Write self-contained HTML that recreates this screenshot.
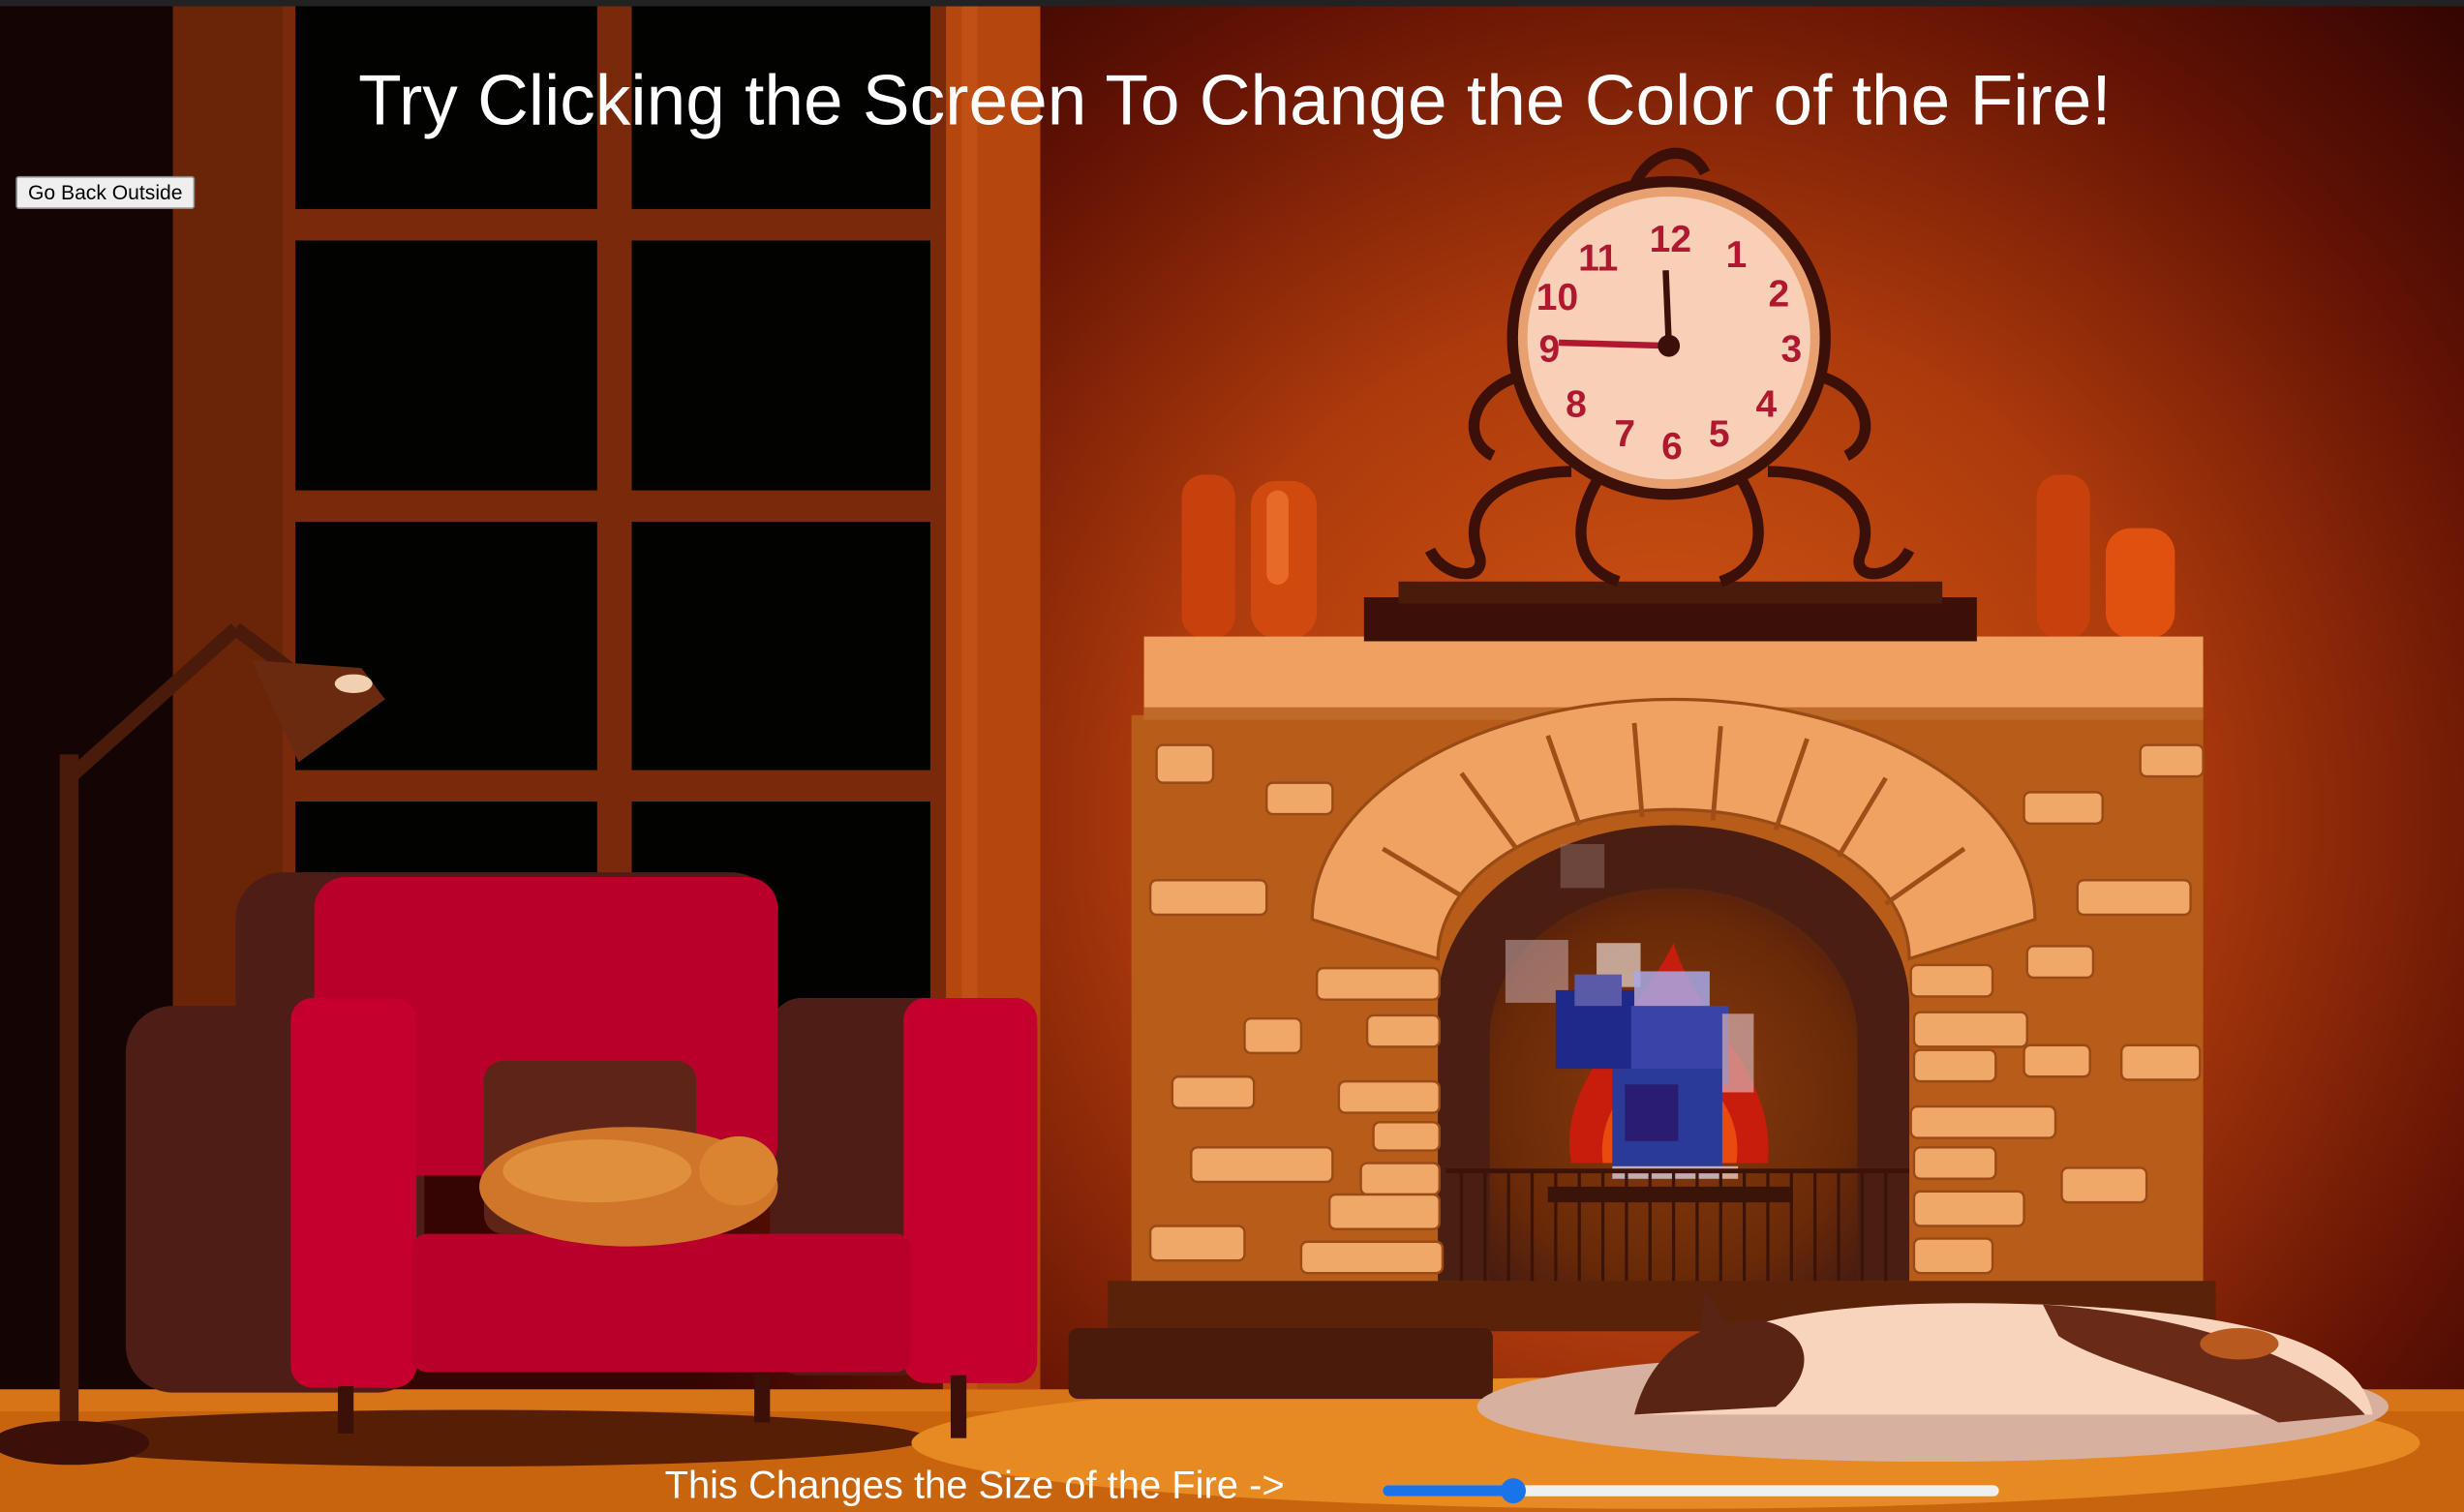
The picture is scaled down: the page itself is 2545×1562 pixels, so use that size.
<!DOCTYPE html>
<html><head><meta charset="utf-8">
<style>
html,body{margin:0;padding:0;width:2545px;height:1562px;overflow:hidden;background:#120404}
#s{position:absolute;left:0;top:0;width:1568px;height:962px;transform:scale(1.62309,1.62370);transform-origin:0 0;overflow:hidden}
.t{position:absolute;font-family:"Liberation Sans",sans-serif;color:#fff;white-space:nowrap}
</style></head><body>
<div id="s">
<svg width="1568" height="962" viewBox="0 0 1568 962" style="position:absolute;left:0;top:0">
<defs>
<radialGradient id="wall" cx="1060" cy="520" r="720" gradientUnits="userSpaceOnUse">
<stop offset="0" stop-color="#d85a14"/><stop offset="0.45" stop-color="#ac3a0c"/><stop offset="0.78" stop-color="#621204"/><stop offset="1" stop-color="#340502"/>
</radialGradient>
<radialGradient id="arch" cx="1065" cy="700" r="160" gradientUnits="userSpaceOnUse">
<stop offset="0" stop-color="#8a3c0c"/><stop offset="0.7" stop-color="#6a2a08"/><stop offset="1" stop-color="#4a1c10"/>
</radialGradient>
</defs>
<rect width="1568" height="962" fill="url(#wall)"/>
<rect width="112" height="962" fill="#140404"/>
<rect x="0" y="0" width="1568" height="4" fill="#222"/>
<rect x="110" y="4" width="76" height="880" fill="#6a2408"/>
<rect x="600" y="4" width="62" height="880" fill="#b4460e"/>
<rect x="612" y="4" width="10" height="880" fill="#c8561a" opacity=".6"/>
<rect x="186" y="4" width="414" height="640" fill="#020201"/>
<g fill="#7a2a0a">
<rect x="380" y="4" width="22" height="640"/>
<rect x="186" y="133" width="414" height="20"/>
<rect x="186" y="312" width="414" height="20"/>
<rect x="186" y="490" width="414" height="20"/>
<rect x="180" y="4" width="8" height="640"/>
<rect x="592" y="4" width="10" height="640"/>
</g>
<rect x="0" y="884" width="1568" height="78" fill="#c8640e"/>
<rect x="0" y="884" width="1568" height="14" fill="#d87418"/>
<ellipse cx="300" cy="915" rx="290" ry="18" fill="#4a1606" opacity=".9"/>
<ellipse cx="1060" cy="918" rx="480" ry="42" fill="#e88a22"/>
<rect x="752" y="302" width="34" height="104" rx="14" fill="#c8400c"/>
<rect x="796" y="306" width="42" height="100" rx="16" fill="#d04a10"/>
<rect x="806" y="312" width="14" height="60" rx="7" fill="#e86a28"/>
<rect x="1296" y="302" width="34" height="104" rx="14" fill="#c8400c"/>
<rect x="1340" y="336" width="44" height="70" rx="16" fill="#e0500e"/>
<rect x="720" y="455" width="682" height="362" fill="#b85c1a"/>
<rect x="728" y="405" width="674" height="52" fill="#f0a060"/>
<rect x="728" y="450" width="674" height="8" fill="#c06a2a"/>
<rect x="868" y="380" width="390" height="28" fill="#3a1008"/>
<rect x="890" y="370" width="346" height="14" fill="#4a1a0a"/>
<path d="M835 585 A230 140 0 0 1 1295 585 L1215 610 A150 95 0 0 0 915 610 Z" fill="#f0a262" stroke="#9a4a14" stroke-width="2"/>
<g stroke="#a04e18" stroke-width="3">
<line x1="880" y1="540" x2="930" y2="570"/><line x1="930" y1="492" x2="965" y2="540"/><line x1="985" y1="468" x2="1005" y2="525"/><line x1="1040" y1="460" x2="1045" y2="520"/><line x1="1095" y1="462" x2="1090" y2="522"/><line x1="1150" y1="470" x2="1130" y2="528"/><line x1="1200" y1="495" x2="1170" y2="545"/><line x1="1250" y1="540" x2="1200" y2="575"/>
</g>
<path d="M915 815 L915 640 A150 115 0 0 1 1215 640 L1215 815 Z" fill="#4a1e10"/>
<path d="M948 815 L948 660 A117 95 0 0 1 1182 660 L1182 815 Z" fill="url(#arch)"/>
<g fill="#f0a868" stroke="#9a4a14" stroke-width="1.5">
<rect x="736" y="474" width="36" height="24" rx="4"/><rect x="806" y="498" width="42" height="20" rx="4"/><rect x="732" y="560" width="74" height="22" rx="4"/>
<rect x="838" y="616" width="78" height="20" rx="4"/><rect x="792" y="648" width="36" height="22" rx="4"/><rect x="870" y="646" width="46" height="20" rx="4"/>
<rect x="746" y="685" width="52" height="20" rx="4"/><rect x="852" y="688" width="64" height="20" rx="4"/><rect x="874" y="714" width="42" height="18" rx="4"/>
<rect x="758" y="730" width="90" height="22" rx="4"/><rect x="866" y="740" width="50" height="20" rx="4"/><rect x="846" y="760" width="70" height="22" rx="4"/>
<rect x="732" y="780" width="60" height="22" rx="4"/><rect x="828" y="790" width="90" height="20" rx="4"/>
<rect x="1362" y="474" width="40" height="20" rx="4"/><rect x="1288" y="504" width="50" height="20" rx="4"/><rect x="1322" y="560" width="72" height="22" rx="4"/>
<rect x="1216" y="614" width="52" height="20" rx="4"/><rect x="1290" y="602" width="42" height="20" rx="4"/><rect x="1218" y="644" width="72" height="22" rx="4"/>
<rect x="1218" y="668" width="52" height="20" rx="4"/><rect x="1288" y="665" width="42" height="20" rx="4"/><rect x="1350" y="665" width="50" height="22" rx="4"/>
<rect x="1216" y="704" width="92" height="20" rx="4"/><rect x="1218" y="730" width="52" height="20" rx="4"/><rect x="1312" y="743" width="54" height="22" rx="4"/>
<rect x="1218" y="758" width="70" height="22" rx="4"/><rect x="1218" y="788" width="50" height="22" rx="4"/>
</g>
<path d="M1000 740 C990 690 1040 650 1065 600 C1080 650 1130 680 1125 740 Z" fill="#c81c0c"/>
<path d="M1020 740 C1015 700 1050 680 1065 650 C1080 690 1110 700 1105 740 Z" fill="#e84a10"/>
<g>
<rect x="958" y="598" width="40" height="40" fill="#bfa0a0" opacity=".6"/>
<rect x="993" y="537" width="28" height="28" fill="#a08080" opacity=".4"/>
<rect x="1016" y="600" width="28" height="28" fill="#e8d8d0" opacity=".7"/>
<rect x="1040" y="618" width="48" height="30" fill="#a8a8e8" opacity=".85"/>
<rect x="990" y="630" width="50" height="50" fill="#1e2a8a"/>
<rect x="1002" y="620" width="30" height="20" fill="#5a5aa8"/>
<rect x="1038" y="640" width="62" height="50" fill="#3a44a8"/>
<rect x="1026" y="680" width="70" height="70" fill="#2a3a98"/>
<rect x="1034" y="690" width="34" height="36" fill="#2a1c70"/>
<rect x="1096" y="645" width="20" height="50" fill="#d8b0b0" opacity=".7"/>
<rect x="1026" y="742" width="80" height="8" fill="#e8c8b8" opacity=".8"/>
</g>
<g stroke="#3a1408" stroke-width="3">
<line x1="920" y1="745" x2="1215" y2="745"/>
<line x1="985" y1="760" x2="1140" y2="760" stroke-width="10"/>
</g>
<g stroke="#3a1408" stroke-width="2">
<line x1="930" y1="745" x2="930" y2="815"/><line x1="945" y1="745" x2="945" y2="815"/><line x1="960" y1="745" x2="960" y2="815"/><line x1="975" y1="745" x2="975" y2="815"/><line x1="990" y1="745" x2="990" y2="815"/><line x1="1005" y1="745" x2="1005" y2="815"/><line x1="1020" y1="745" x2="1020" y2="815"/><line x1="1035" y1="745" x2="1035" y2="815"/><line x1="1050" y1="745" x2="1050" y2="815"/><line x1="1065" y1="745" x2="1065" y2="815"/><line x1="1080" y1="745" x2="1080" y2="815"/><line x1="1095" y1="745" x2="1095" y2="815"/><line x1="1110" y1="745" x2="1110" y2="815"/><line x1="1125" y1="745" x2="1125" y2="815"/><line x1="1140" y1="745" x2="1140" y2="815"/><line x1="1155" y1="745" x2="1155" y2="815"/><line x1="1170" y1="745" x2="1170" y2="815"/><line x1="1185" y1="745" x2="1185" y2="815"/><line x1="1200" y1="745" x2="1200" y2="815"/>
</g>
<rect x="705" y="815" width="705" height="32" fill="#5a2208"/>
<rect x="680" y="845" width="270" height="45" rx="6" fill="#4a1a0a"/>
<g fill="none" stroke="#3a1008" stroke-width="7">
<path d="M1000 300 C960 300 930 320 940 350 C950 370 920 370 910 350"/>
<path d="M1125 300 C1165 300 1195 320 1185 350 C1175 370 1205 370 1215 350"/>
<path d="M1020 300 C1000 330 1000 360 1030 370"/>
<path d="M1105 300 C1125 330 1125 360 1095 370"/>
<path d="M965 240 C935 250 930 280 950 290"/>
<path d="M1160 240 C1190 250 1195 280 1175 290"/>
<path d="M1040 118 C1050 95 1075 90 1085 110"/>
</g>
<circle cx="1062" cy="215" r="103" fill="#3a1008"/>
<circle cx="1062" cy="215" r="96" fill="#e8a070"/>
<circle cx="1062" cy="215" r="90" fill="#f8d0b8"/>
<g font-family="Liberation Sans,sans-serif" font-size="24" fill="#b01830" font-weight="bold" text-anchor="middle">
<text x="1063" y="160">12</text><text x="1105" y="170">1</text><text x="1132" y="195">2</text><text x="1140" y="230">3</text><text x="1124" y="265">4</text><text x="1094" y="284">5</text><text x="1064" y="292">6</text><text x="1034" y="284">7</text><text x="1003" y="265">8</text><text x="986" y="230">9</text><text x="991" y="197">10</text><text x="1017" y="172">11</text>
</g>
<line x1="1062" y1="220" x2="1060" y2="172" stroke="#3a1008" stroke-width="4"/>
<line x1="1062" y1="220" x2="992" y2="218" stroke="#b01830" stroke-width="4"/>
<circle cx="1062" cy="220" r="7" fill="#3a1008"/>
<rect x="38" y="480" width="12" height="430" fill="#4a1a0a"/>
<line x1="44" y1="495" x2="150" y2="400" stroke="#4a1a0a" stroke-width="9"/>
<line x1="150" y1="400" x2="190" y2="430" stroke="#4a1a0a" stroke-width="9"/>
<path d="M160 420 L230 425 L245 445 L190 485 Z" fill="#6a2a10"/>
<ellipse cx="225" cy="435" rx="12" ry="6" fill="#f0d0b0"/>
<ellipse cx="45" cy="918" rx="50" ry="14" fill="#3a1008"/>
<rect x="80" y="640" width="190" height="246" rx="30" fill="#4e1e16"/>
<rect x="490" y="635" width="170" height="240" rx="20" fill="#4e1e16"/>
<rect x="150" y="555" width="345" height="190" rx="30" fill="#4e1e16"/>
<rect x="200" y="558" width="295" height="190" rx="20" fill="#b8002a"/>
<rect x="185" y="635" width="80" height="248" rx="14" fill="#c4002e"/>
<rect x="575" y="635" width="85" height="245" rx="14" fill="#c4002e"/>
<rect x="262" y="785" width="318" height="88" rx="10" fill="#b8002a"/>
<rect x="308" y="675" width="135" height="110" rx="12" fill="#5e2418"/>
<ellipse cx="400" cy="755" rx="95" ry="38" fill="#d0762a"/>
<ellipse cx="470" cy="745" rx="25" ry="22" fill="#d88430"/>
<ellipse cx="380" cy="745" rx="60" ry="20" fill="#e0903c"/>
<rect x="215" y="882" width="10" height="30" fill="#3a1008"/><rect x="480" y="875" width="10" height="30" fill="#3a1008"/><rect x="605" y="875" width="10" height="40" fill="#3a1008"/>
<ellipse cx="1230" cy="895" rx="290" ry="35" fill="#d8b0a0"/>
<path d="M1040 900 C1060 840 1160 825 1300 830 C1420 835 1500 850 1510 900 Z" fill="#f8d4bc"/>
<path d="M1300 830 C1380 835 1470 860 1505 900 L1450 905 C1400 880 1340 870 1310 850 Z" fill="#6a2a18"/>
<path d="M1040 900 C1050 860 1080 840 1120 840 C1150 845 1160 870 1130 895 Z" fill="#5a2414"/>
<path d="M1085 820 L1100 845 L1080 860 Z" fill="#5a2414"/>
<ellipse cx="1425" cy="855" rx="25" ry="10" fill="#b85a20"/>
</svg>
<div class="t" style="left:228px;top:38px;font-size:45px">Try Clicking the Screen To Change the Color of the Fire!</div>
<div style="position:absolute;left:10px;top:112px;width:112px;height:19px;background:#efefef;border:1px solid #888;border-radius:2px;font:13px 'Liberation Sans',sans-serif;color:#000;text-align:center;line-height:19px">Go Back Outside</div>
<div class="t" style="left:423px;top:932px;font-size:24.6px">This Changes the Size of the Fire -&gt;</div>
<svg width="400" height="30" style="position:absolute;left:876px;top:934px">
<rect x="4" y="11" width="392" height="7" rx="3.5" fill="#efefef"/>
<rect x="4" y="11" width="84" height="7" rx="3.5" fill="#1a73e8"/>
<circle cx="87" cy="14.5" r="8" fill="#1a73e8"/>
</svg>
</div>
</body></html>
